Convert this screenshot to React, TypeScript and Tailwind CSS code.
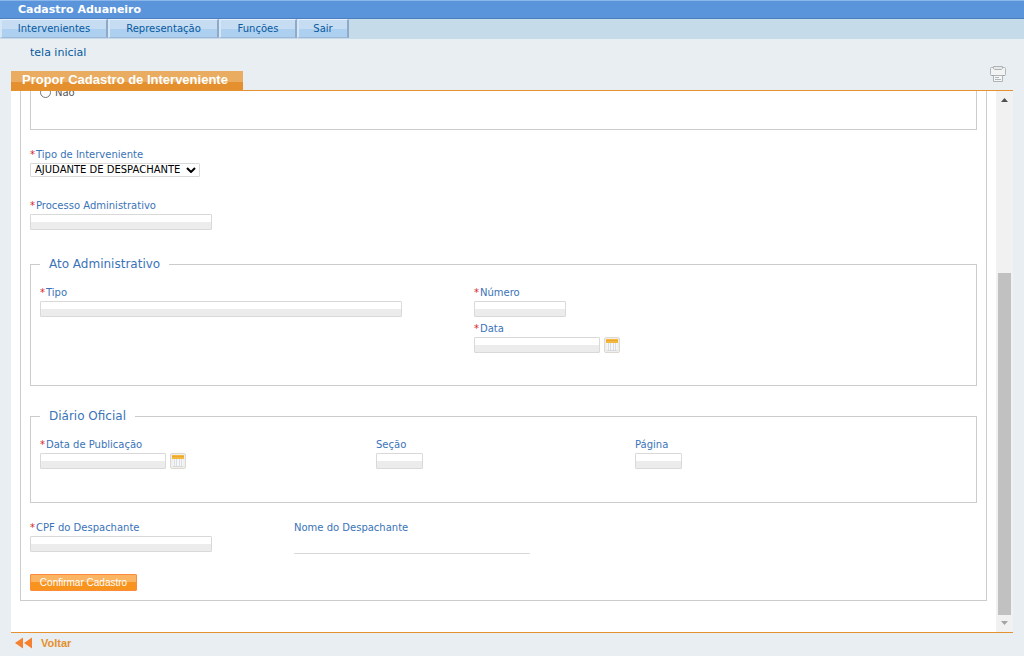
import type { ReactNode } from 'react'

const menu = [
  { label: 'Intervenientes', width: 'w-[108px]' },
  { label: 'Representação', width: 'w-[111px]' },
  { label: 'Funções', width: 'w-[78px]' },
  { label: 'Sair', width: 'w-[52px]' },
]

type FieldProps = {
  id: string
  label: string
  required?: boolean
  width: string
  children?: ReactNode
}

function Label({ id, label, required }: { id: string; label: string; required?: boolean }) {
  return (
    <label htmlFor={id} className="flex h-[15px] text-[10px] leading-[14px] text-[#3a73b8] whitespace-nowrap">
      {required && <span className="w-[6px] text-[#d8232a]">*</span>}
      {label}
    </label>
  )
}

function Field({ id, label, required, width, children }: FieldProps) {
  return (
    <div>
      <Label id={id} label={label} required={required} />
      <div className="flex gap-1">
        <input
          id={id}
          type="text"
          className={`${width} h-4 px-1 text-[10px] text-black border border-[#d9d9d9] rounded-[1px] bg-linear-to-b from-white from-50% to-[#ececec] to-50% outline-none`}
        />
        {children}
      </div>
    </div>
  )
}

function CalendarButton() {
  return (
    <button type="button" aria-label="Abrir calendário" className="w-4 h-4 shrink-0">
      <svg width="16" height="16" viewBox="0 0 16 16">
        <rect x="0.5" y="0.5" width="15" height="15" rx="1.5" fill="#f0efed" stroke="#ddd8d0" />
        <rect x="2" y="2" width="12" height="4" fill="#f3b840" />
        <rect x="2" y="3" width="12" height="1" fill="#eda72c" />
        <rect x="3" y="6" width="10" height="7" fill="#f6f7f8" />
        <path d="M4.5 6v7M6.5 6v7M9.5 6v7M11.5 6v7" stroke="#dadde1" fill="none" />
        <path d="M3 13.5h10" stroke="#d6d8da" fill="none" />
      </svg>
    </button>
  )
}

function PrinterIcon() {
  return (
    <svg width="18" height="18" viewBox="0 0 18 18">
      <rect x="1.5" y="2.5" width="15" height="8" rx="1" fill="#f2f3f3" stroke="#b3b6b8" />
      <path d="M4.5 1.5h9v2l-1 1h-7l-1-1z" fill="#e6e8e9" stroke="#b0b3b5" />
      <path d="M2.5 10.5h13" stroke="#999c9e" />
      <path d="M4.5 10.5h9v6h-9z" fill="#f5f6f6" stroke="#b0b3b5" />
      <path d="M6 12.5h4M6 14.5h6" stroke="#b4b7b9" />
    </svg>
  )
}

function Group({ title, className, children }: { title: string; className: string; children: ReactNode }) {
  return (
    <fieldset className={`border border-[#cccccc] px-[9px] ${className}`}>
      <legend className="px-[9px] text-[12px] leading-4 text-[#3a73b8]">{title}</legend>
      {children}
    </fieldset>
  )
}

export default function App() {
  return (
    <div className="flex flex-col h-screen bg-[#e9eef2] font-['DejaVu_Sans',Verdana,sans-serif]">
      {/* Top bar */}
      <header className="h-[19px] shrink-0 pl-[18px] bg-[#5a95db] border-t border-t-[#8ab6ea] border-b border-b-[#4c7fbd]">
        <h1 className="text-[11px] leading-[17px] font-bold text-white">Cadastro Aduaneiro</h1>
      </header>
      <nav className="flex h-5 shrink-0 bg-[#c5dbe9]">
        {menu.map((item) => (
          <button
            key={item.label}
            type="button"
            className={`${item.width} h-[19px] text-[10px] text-center text-[#065a9e] bg-linear-to-b from-[#c6dcf3] from-50% to-[#adcff0] to-50% border-l-2 border-l-[#d5e6f7] border-r-2 border-r-[#8fa9c9] border-t border-t-[#e6f0fa] border-b border-b-[#9db9d6]`}
          >
            {item.label}
          </button>
        ))}
      </nav>

      <div className="pl-[30px] pt-1.5 h-8 shrink-0">
        <a href="#inicio" className="text-[11px] leading-4 block w-fit text-[#065a9e]">tela inicial</a>
      </div>

      {/* Page title */}
      <div className="flex items-end justify-between h-5 shrink-0 mx-[11px] border-b border-[#e69130]">
        <h2 className="h-[19px] pl-[11px] pr-[15px] font-['Liberation_Sans',Arial,sans-serif] text-[13px] leading-[17px] font-bold text-white whitespace-nowrap bg-linear-to-b from-[#e9ac60] from-60% to-[#e4902e] to-60%">
          Propor Cadastro de Interveniente
        </h2>
        <button type="button" aria-label="Imprimir" className="mr-1.5 mb-[7px]">
          <PrinterIcon />
        </button>
      </div>

      <main className="flex flex-1 min-h-0 mx-[11px] bg-white">
        <div className="flex-1 min-w-0 px-[9px] overflow-hidden">
          <form className="-mt-1.5 px-[9px] pb-[9px] border-x border-b border-[#cccccc]" onSubmit={(e) => e.preventDefault()}>
            <div className="px-[9px] pb-[30px] border-x border-b border-[#cccccc]">
              <label className="flex items-center h-[14px] gap-1 text-[10px] text-[#555555]">
                <input type="radio" name="resposta" value="nao" className="appearance-none w-[11px] h-[11px] rounded-full border border-[#767676] bg-white" />
                Não
              </label>
            </div>

            <div className="mt-[18px]">
              <Label id="tipoInterveniente" label="Tipo de Interveniente" required />
              <div className="relative w-[170px] h-[14px]">
                <select
                  id="tipoInterveniente"
                  className="block appearance-none w-full h-full pl-1 pr-3 text-[10px] leading-3 text-black bg-white border border-[#d9d9d9] rounded-[1px] outline-none"
                >
                  <option>AJUDANTE DE DESPACHANTE</option>
                </select>
                <svg className="absolute right-1 top-1 pointer-events-none" width="10" height="6" viewBox="0 0 10 6">
                  <path d="M1 1l4 4 4-4" fill="none" stroke="#000" strokeWidth="2" />
                </svg>
              </div>
            </div>

            <div className="mt-[22px]">
              <Field id="processo" label="Processo Administrativo" required width="w-[182px]" />
            </div>

            <Group title="Ato Administrativo" className="mt-[26px] pb-8">
              <div className="grid grid-cols-[434fr_493fr] pt-[14px]">
                <Field id="tipo" label="Tipo" required width="w-[362px]" />
                <div className="flex flex-col gap-[5px]">
                  <Field id="numero" label="Número" required width="w-[92px]" />
                  <Field id="data" label="Data" required width="w-[126px]">
                    <CalendarButton />
                  </Field>
                </div>
              </div>
            </Group>

            <Group title="Diário Oficial" className="mt-[22px] pb-[33px]">
              <div className="grid grid-cols-[336fr_259fr_332fr] pt-[14px]">
                <Field id="dataPublicacao" label="Data de Publicação" required width="w-[126px]">
                  <CalendarButton />
                </Field>
                <Field id="secao" label="Seção" width="w-[47px]" />
                <Field id="pagina" label="Página" width="w-[47px]" />
              </div>
            </Group>

            <div className="grid grid-cols-[264fr_683fr] mt-[18px]">
              <Field id="cpf" label="CPF do Despachante" required width="w-[182px]" />
              <div>
                <Label id="nome" label="Nome do Despachante" />
                <input
                  id="nome"
                  type="text"
                  readOnly
                  className="block w-[236px] h-[18px] text-[10px] border-b border-[#d9d9d9] outline-none"
                />
              </div>
            </div>

            <button
              type="submit"
              className="block mt-5 w-[107px] h-[17px] font-['Liberation_Sans',Arial,sans-serif] text-[10px] leading-[15px] text-white whitespace-nowrap border border-[#ff8a3a] rounded-[1px] bg-linear-to-b from-[#fbb562] from-50% to-[#f8931d] to-50%"
            >
              Confirmar Cadastro
            </button>
          </form>
        </div>

        {/* Scroll track */}
        <div className="flex flex-col items-center w-[17px] shrink-0 bg-[#f1f1f1]">
          <svg width="17" height="17" viewBox="0 0 17 17" className="shrink-0">
            <path d="M5 11h7L8.5 7z" fill="#505050" />
          </svg>
          <div className="flex flex-1 flex-col justify-end w-[13px]">
            <div className="h-[67.5%] bg-[#c1c1c1]" />
          </div>
          <svg width="17" height="17" viewBox="0 0 17 17" className="shrink-0">
            <path d="M5 6h7l-3.5 4z" fill="#a3a3a3" />
          </svg>
        </div>
      </main>

      {/* Footer */}
      <footer className="h-6 shrink-0 mx-[11px] border-t border-[#e69130]">
        <a
          href="#voltar"
          className="flex items-center w-fit h-5 gap-2 pl-1 font-['Liberation_Sans',Arial,sans-serif] text-[11px] font-bold text-[#e4902e]"
        >
          <svg width="18" height="12" viewBox="0 0 18 12">
            <path d="M8 0.5v11L0 6zM17 0.5v11L9 6z" fill="#f5812f" />
          </svg>
          Voltar
        </a>
      </footer>
    </div>
  )
}
